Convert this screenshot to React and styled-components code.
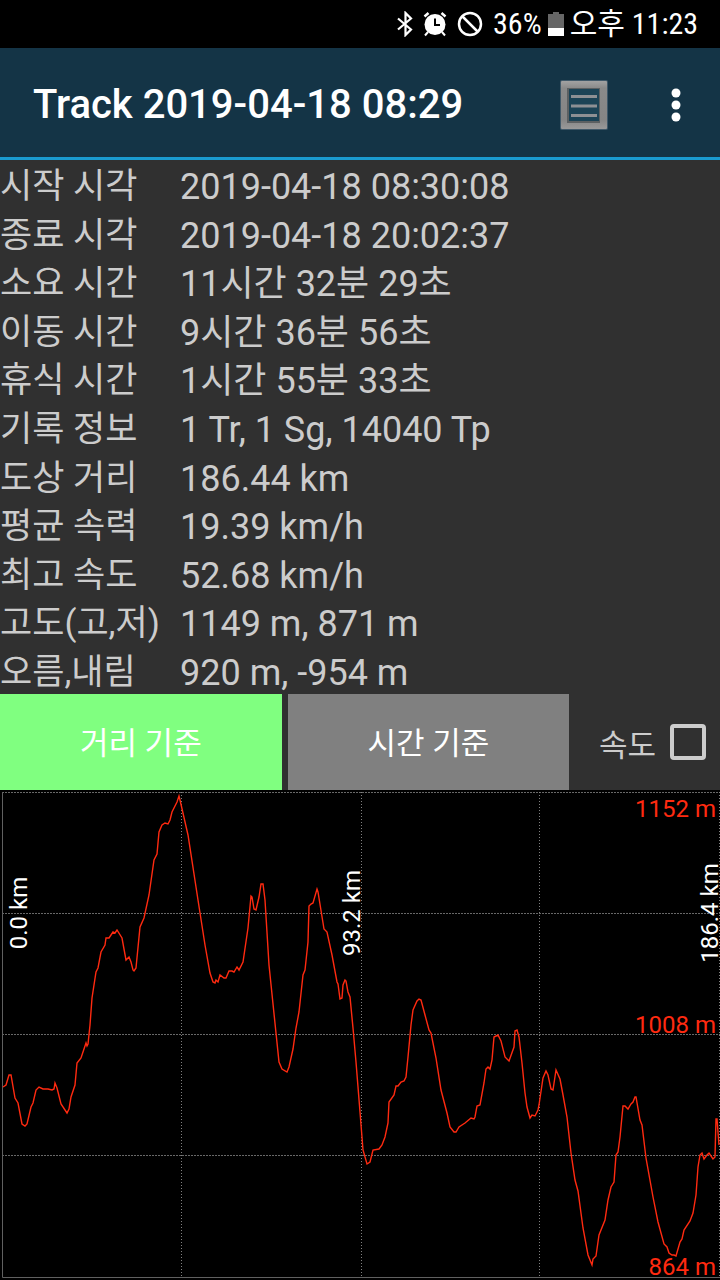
import React, { useState } from 'react'
import styled, { createGlobalStyle } from 'styled-components'

const GlobalStyle = createGlobalStyle`
    *{
        box-sizing: border-box;
    }
    body{
        margin: 0;
        background: #303030;
        font-family: Roboto, 'Noto Sans CJK KR', sans-serif;
    }
`

const rows = [
    ['시작 시각', '2019-04-18 08:30:08'],
    ['종료 시각', '2019-04-18 20:02:37'],
    ['소요 시간', '11시간 32분 29초'],
    ['이동 시간', '9시간 36분 56초'],
    ['휴식 시간', '1시간 55분 33초'],
    ['기록 정보', '1 Tr, 1 Sg, 14040 Tp'],
    ['도상 거리', '186.44 km'],
    ['평균 속력', '19.39 km/h'],
    ['최고 속도', '52.68 km/h'],
    ['고도(고,저)', '1149 m, 871 m'],
    ['오름,내림', '920 m, -954 m'],
]

// elevation profile, x/y inside the 720x490 chart
const profile = `
    3,297 6,295 9,285 11,285 15,308 18,313 22,334 25,336 27,334 31,317 33,313 36,300 39,297 43,299 48,299
    52,300 54,299 55,293 57,298 61,314 67,323 69,319 71,307 75,295 77,273 81,268 86,253 87,256 88,254
    90,235 92,208 96,182 98,178 101,162 105,155 106,148 109,148 113,142 115,143 117,140 122,148 126,170
    129,167 131,172 133,180 134,181 136,178 140,137 144,128 149,105 154,70 157,64 159,42 162,35 165,33
    168,34 170,30 172,22 177,12 179,6 180,10 188,45 198,110 205,155 210,183 213,192 215,193 216,190
    218,192 220,185 224,188 226,188 229,181 232,181 234,182 237,177 239,180 243,172 248,138 251,106
    252,107 254,119 256,120 259,107 261,94 263,94 265,110 269,175 276,243 279,272 282,279 287,282
    289,277 293,259 296,238 299,222 303,185 305,180 308,152 309,116 311,114 313,113 317,99 318,102
    324,139 327,142 332,165 337,192 338,194 340,209 342,208 343,195 345,190 346,191 348,202 350,207
    353,238 356,272 360,322 363,360 367,374 370,372 373,360 379,359 382,355 385,347 388,333 389,312
    394,305 396,296 398,296 401,292 404,291 406,287 408,267 411,235 413,220 417,211 419,209 421,210
    425,225 429,240 431,243 436,268 441,300 447,323 450,337 454,342 456,342 459,337 465,333 471,328
    474,329 475,327 477,316 480,315 484,293 486,279 488,277 490,279 492,270 494,247 498,245 501,251
    505,267 509,271 514,257 515,241 517,240 519,247 522,273 525,303 527,317 530,328 532,325 535,326
    538,320 539,315 543,288 546,281 548,285 551,299 553,300 556,280 560,289 563,305 567,327 571,363
    575,390 578,401 583,438 588,465 592,475 593,469 596,466 599,445 605,430 608,410 611,397 614,392
    616,365 618,362 620,347 623,316 625,316 628,319 631,314 633,312 635,307 636,307 640,330 642,335
    646,368 653,407 658,432 664,454 667,457 669,463 672,465 674,465 676,466 680,452 682,449 684,440
    690,431 693,423 696,405 698,377 700,365 702,363 704,369 707,365 709,363 713,369 715,367 716,329
    717,329 719,355
`

function StatusIcons() {
    return (
        <StatusGroup>
            <svg width="16" height="26" viewBox="0 0 16 26" fill="none" stroke="#fff" strokeWidth="2.2">
                <path d="M1 7.5 14 18.5 8.500 24V2L14 7.500 1 18.500" />
            </svg>
            <svg width="24" height="26" viewBox="0 0 24 26">
                <circle cx="12" cy="13.5" r="10.5" fill="#fff" />
                <path d="M1.500 5.500 5.500 2M22.500 5.500 18.500 2" stroke="#fff" strokeWidth="2.500" />
                <path d="M5 21l-3 3.500M19 21l3 3.500" stroke="#fff" strokeWidth="2" />
                <path d="M12 7.500V14h5" fill="none" stroke="#000" strokeWidth="2" />
            </svg>
            <svg width="26" height="26" viewBox="0 0 26 26" fill="none" stroke="#fff" strokeWidth="2.5">
                <circle cx="13" cy="13" r="11" />
                <path d="M5.500 5.500l15 15" />
            </svg>
        </StatusGroup>
    )
}

function Battery() {
    return (
        <svg width="16" height="24" viewBox="0 0 16 24">
            <path d="M0 2h5V0h6v2h5v14H0z" fill="#666" />
            <path d="M0 16h16v8H0z" fill="#fff" />
        </svg>
    )
}

function ListIcon() {
    return (
        <svg width="50" height="52" viewBox="0 0 50 52">
            <defs>
                <linearGradient id="frame" x1="0" y1="0" x2="0" y2="1">
                    <stop offset="0" stopColor="#a2a2a2" />
                    <stop offset="0.15" stopColor="#8a8a8a" />
                    <stop offset="0.8" stopColor="#858585" />
                    <stop offset="1" stopColor="#999" />
                </linearGradient>
            </defs>
            <rect x="1" y="1" width="48" height="50" rx="2" fill="#40596a" />
            <rect x="2" y="2" width="46" height="48" rx="1" fill="url(#frame)" />
            <rect x="8" y="9" width="33" height="35" fill="#5c6062" />
            <rect x="10" y="10" width="30" height="32" fill="#1b4356" />
            <path d="M12 17.500h26M12 27h26M12 36.500h26" stroke="#8d9094" strokeWidth="3" />
        </svg>
    )
}

function Chart() {
    return (
        <ChartSvg viewBox="0 0 720 490" role="img" aria-label="고도">
            <g stroke="#686868" strokeDasharray="2 1">
                <path d="M2 2.500h718M2 123.500h718M2 244.500h718M2 365.500h718" />
            </g>
            <g stroke="#808080" strokeDasharray="1 2">
                <path d="M181.500 2v485M361.500 2v485M539.500 2v485M719.500 2v485" />
            </g>
            <path d="M2.500 2v485.500H720" fill="none" stroke="#606060" />
            <polyline points={profile} fill="none" stroke="#ff2a10" strokeWidth="1.4" />
            <AxisText x="716" y="27">1152 m</AxisText>
            <AxisText x="716" y="243">1008 m</AxisText>
            <AxisText x="716" y="485">864 m</AxisText>
            <DistanceText transform="translate(27 123) rotate(-90)">0.0 km</DistanceText>
            <DistanceText transform="translate(360 123) rotate(-90)">93.2 km</DistanceText>
            <DistanceText transform="translate(718 123) rotate(-90)">186.4 km</DistanceText>
        </ChartSvg>
    )
}

function App() {
    const [base, setBase] = useState('distance')
    const [speed, setSpeed] = useState(false)

    return (
        <Page>
            <GlobalStyle />
            <StatusBar>
                <StatusIcons />
                <span>36%</span>
                <Battery />
                <span>오후 11:23</span>
            </StatusBar>
            <Header>
                <h1>Track 2019-04-18 08:29</h1>
                <IconButton aria-label="목록">
                    <ListIcon />
                </IconButton>
                <IconButton aria-label="메뉴">
                    <svg width="10" height="34" viewBox="0 0 10 34" fill="#fff">
                        <circle cx="5" cy="5" r="4.5" />
                        <circle cx="5" cy="17" r="4.5" />
                        <circle cx="5" cy="29" r="4.5" />
                    </svg>
                </IconButton>
            </Header>
            <InfoTable>
                <tbody>
                    {rows.map(([name, value]) => (
                        <tr key={name}>
                            <th scope="row">{name}</th>
                            <td>{value}</td>
                        </tr>
                    ))}
                </tbody>
            </InfoTable>
            <Controls>
                <BaseButton $active={base === 'distance'} onClick={() => setBase('distance')}>
                    거리 기준
                </BaseButton>
                <BaseButton $active={base === 'time'} onClick={() => setBase('time')}>
                    시간 기준
                </BaseButton>
                <SpeedLabel>
                    속도
                    <input type="checkbox" checked={speed} onChange={e => setSpeed(e.target.checked)} />
                </SpeedLabel>
            </Controls>
            <Chart />
        </Page>
    )
}

const Page = styled.div`
    display: flex;
    flex-direction: column;
    min-height: 100vh;
    color: #ccc;
`

const StatusBar = styled.div`
    display: flex;
    align-items: center;
    justify-content: flex-end;
    gap: 6px;
    height: 48px;
    padding-right: 22px;
    background: #000;
    color: #fff;
    font-family: 'Roboto Condensed', Roboto, 'Noto Sans CJK KR', sans-serif;
    font-size: 30px;
    line-height: 48px;
    white-space: nowrap;
`

const StatusGroup = styled.div`
    display: flex;
    align-items: center;
    gap: 10px;
    margin-right: 4px;
`

const Header = styled.header`
    display: flex;
    align-items: center;
    height: 112px;
    padding: 4px 12px 0 33px;
    background: #143446;
    border-bottom: 3px solid #1a9bd0;
    h1{
        flex: 1;
        margin: 0;
        color: #fff;
        font-size: 40px;
        font-weight: 500;
        white-space: nowrap;
    }
`

const IconButton = styled.button`
    display: flex;
    align-items: center;
    justify-content: center;
    min-width: 64px;
    height: 80px;
    padding: 0;
    border: none;
    background: transparent;
    cursor: pointer;
    & + &{
        margin-left: 28px;
    }
`

const InfoTable = styled.table`
    display: flex;
    flex: 1;
    font-size: 36px;
    line-height: 42px;
    tbody{
        display: grid;
        flex: 1;
        grid-auto-rows: 1fr;
    }
    tr{
        display: grid;
        grid-template-columns: 180px 1fr;
        align-items: center;
        padding-top: 6px;
    }
    th, td{
        padding: 0;
        font-weight: 400;
        text-align: left;
        white-space: nowrap;
    }
    th{
        font-size: 35px;
    }
`

const Controls = styled.div`
    display: grid;
    grid-template-columns: 35fr 35fr 18fr;
    gap: 6px;
    height: 96px;
`

const BaseButton = styled.button`
    padding: 0 0 4px;
    border: none;
    background: ${({ $active }) => ($active ? '#80ff80' : '#808080')};
    color: #fff;
    font-family: inherit;
    font-size: 31px;
    cursor: pointer;
`

const SpeedLabel = styled.label`
    display: flex;
    align-items: center;
    justify-content: flex-end;
    gap: 14px;
    padding-right: 14px;
    font-size: 31px;
    white-space: nowrap;
    input{
        appearance: none;
        width: 36px;
        height: 36px;
        margin: 0;
        border: 4px solid #ccc;
        border-radius: 4px;
    }
    input:checked{
        background: #ccc;
    }
`

const ChartSvg = styled.svg`
    display: block;
    width: 100%;
    background: #000;
`

const AxisText = styled.text`
    fill: #ff2a10;
    font-size: 24px;
    text-anchor: end;
`

const DistanceText = styled.text`
    fill: #fff;
    font-size: 24px;
    text-anchor: middle;
`

export default App
